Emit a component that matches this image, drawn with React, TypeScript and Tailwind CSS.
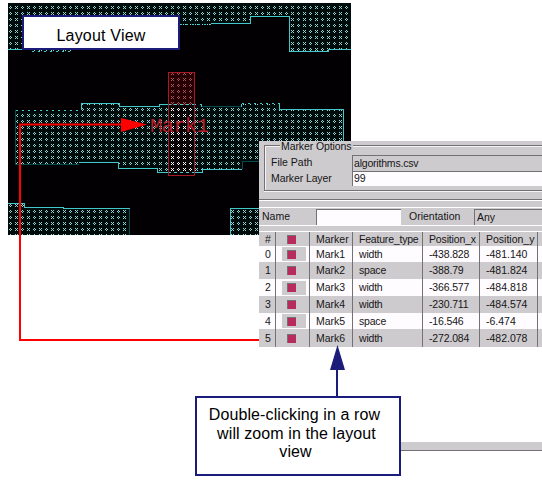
import React from "react";

const rows = [
  ["0", "Mark1", "width", "-438.828", "-481.140"],
  ["1", "Mark2", "space", "-388.79", "-481.824"],
  ["2", "Mark3", "width", "-366.577", "-484.818"],
  ["3", "Mark4", "width", "-230.711", "-484.574"],
  ["4", "Mark5", "space", "-16.546", "-6.474"],
  ["5", "Mark6", "width", "-272.084", "-482.078"],
];

const rowHeights = ["h-[16px]", "h-[17px]", "h-[17px]", "h-[17px]", "h-[16px]", "h-[18px]"];

function LayoutCanvas() {
  return (
    <svg className="absolute left-[8px] top-[3px]" width="343" height="232" viewBox="8 3 343 232" shapeRendering="crispEdges">
      <defs>
        {/* alternating columns of crosses and rings */}
        <pattern id="mesh" x="8" y="5" width="12" height="6" patternUnits="userSpaceOnUse">
          <rect width="12" height="6" fill="#000c0c" />
          <path d="M2 1h1v1h-1zM1 2h1v1h-1zM3 2h1v1h-1zM2 3h1v1h-1zM7 1h1v1h-1zM9 1h1v1h-1zM8 2h1v1h-1zM7 3h1v1h-1zM9 3h1v1h-1z" fill="#8fd8d8" />
        </pattern>
        <pattern id="redMesh" x="8" y="5" width="12" height="6" patternUnits="userSpaceOnUse">
          <rect width="12" height="6" fill="#260003" />
          <path d="M2 1h1v1h-1zM1 2h1v1h-1zM3 2h1v1h-1zM2 3h1v1h-1zM7 1h1v1h-1zM9 1h1v1h-1zM8 2h1v1h-1zM7 3h1v1h-1zM9 3h1v1h-1z" fill="#a85560" />
        </pattern>
        <pattern id="whiteMesh" x="8" y="5" width="12" height="6" patternUnits="userSpaceOnUse">
          <rect width="12" height="6" fill="#0a0506" />
          <path d="M2 1h1v1h-1zM1 2h1v1h-1zM3 2h1v1h-1zM2 3h1v1h-1zM7 1h1v1h-1zM9 1h1v1h-1zM8 2h1v1h-1zM7 3h1v1h-1zM9 3h1v1h-1z" fill="#ffffff" />
        </pattern>
      </defs>
      <rect x="8" y="3" width="343" height="232" fill="#020003" />
      <path d="M8 3H351V49.5H328.5V51.5H289.5V16.5H250.5V23.5H211V24.5H71.5V51.5H32V49.5H8z" fill="url(#mesh)" />
      <path d="M15.5 110.5H81.5V103.5H119.5V106.5H159.5V104.5H201.5V106.5H241.5V103.5H279.5V109.5H343.5V161.5H242.5V169.5H202.5V172.5H157.5V168.5H118.5V162.5H79V164.5H15.5z" fill="url(#mesh)" />
      <path d="M8 203.5H24.5V207.5H63.5V208.5H129.5V235H8zM230.5 208.5H351V235H230.5z" fill="url(#mesh)" />
      <g fill="none" stroke="#42c8ca">
        <path d="M8 49.5H32M211 23.5H250.5V16.5H289.5V51.5H328.5V49.5H351" />
        <path d="M81.5 110V103.5H119.5V106.5H159.5V104.5H168M201.5 104V107M241.5 107V103.5M279.5 103V109.5H343.5V161" />
        <path d="M79 162.5H118.5V168.5H157.5V172.5H202.5V169.5H242" />
        <path d="M8 203.5H24.5V207.5H63.5V208.5H129.5M230.5 235V208.5H260" />
        <path d="M32 51.5H71M180 24.5H211M16 110.5H81M194 104.5H201M242 103.5H279" strokeDasharray="2 4" />
      </g>
      <path d="M15.5 110V164.5H79M202 106.5H241M242.5 169V161.5H343M129.5 209V235" fill="none" stroke="#064b4d" />
      <rect x="168.5" y="72.5" width="26" height="32" fill="url(#redMesh)" />
      <rect x="168.5" y="104.5" width="26" height="68" fill="url(#whiteMesh)" />
      <path d="M168 104.5H195M168 172.5H195" stroke="#48cfce" strokeDasharray="3 3" />
      <rect x="168.5" y="72.5" width="26" height="103" fill="none" stroke="#a51a25" />
      <text x="150" y="132" fill="#b51f2a" className="font-['Liberation_Mono']" fontSize="21" textLength="59" lengthAdjust="spacing">Mark1</text>
    </svg>
  );
}

function MarkerTable() {
  return (
    <div className="flex flex-col border-t border-white">
      <div className="flex h-[14px] items-center bg-[#cdcbcd]">
        <Cells values={["#", "Marker", "Feature_type", "Position_x", "Position_y"]} boxed={false} />
      </div>
      {rows.map((row, i) => (
        <div key={row[0]} className={`flex items-center ${rowHeights[i]} ${i % 2 ? "bg-[#cdcbcd]" : "bg-[#fefcfe]"}`}>
          <Cells values={row} boxed={i % 2 === 0} />
        </div>
      ))}
    </div>
  );
}

function Cells({ values, boxed }: { values: string[]; boxed: boolean }) {
  const cell = "flex h-full shrink-0 items-center border-r border-[#737173] whitespace-pre pl-[6px]";
  return (
    <>
      <div className={`${cell} w-[17px] pl-[5px]`}>{values[0]}</div>
      <div className={`${cell} w-[34px] pl-[5px]`}>
        <div className={`flex h-[14px] w-[24px] items-center pl-[5px] ${boxed ? "bg-[#cdcbcd]" : ""}`}>
          <div className="h-[9px] w-[9px] border-l border-t border-[#737173] bg-[#b72c5d]" />
        </div>
      </div>
      <div className={`${cell} w-[43px]`}>{values[1]}</div>
      <div className={`${cell} w-[70px] tracking-[-0.2px]`}>{values[2]}</div>
      <div className={`${cell} w-[57px] tracking-[-0.15px]`}>{values[3]}</div>
      <div className={`${cell} w-[58px]`}>{values[4]}</div>
    </>
  );
}

function MarkerPanel() {
  return (
    <section className="absolute left-[259px] top-[141px] flex h-[206px] w-[283px] flex-col overflow-hidden bg-[#cdcbcd] text-[10.5px] leading-none text-[#171517]">
      <div className="h-[58px] pl-[5px] pt-1">
        <div className="h-[46px] border-y border-l border-[#737173] shadow-[inset_1px_1px_0_#f5f3f5,0_1px_0_#f5f3f5]">
          <div className="-mt-[5px] ml-[15px] w-[73px] bg-[#cdcbcd] pl-px whitespace-nowrap tracking-[-0.1px]">Marker Options</div>
          <div className="mt-[3px] flex h-[16px] items-center">
            <span className="w-[87px] pl-[6px]">File Path</span>
            <div className="flex h-full flex-1 items-center border-l border-t border-[#737173] pl-px tracking-[-0.2px]">algorithms.csv</div>
          </div>
          <div className="flex h-[15px] items-center">
            <span className="w-[87px] pl-[6px] tracking-[-0.1px]">Marker Layer</span>
            <div className="flex h-full flex-1 items-center border-l border-t border-[#737173] bg-[#fefcfe] pl-px">99</div>
          </div>
        </div>
      </div>
      <div className="h-[8px] border-t border-[#737173] shadow-[inset_0_1px_0_white]" />
      <div className="flex h-[18px] items-center border-t border-white">
        <span className="w-[57px] pl-[3px]">Name</span>
        <div className="h-[16px] w-[85px] border-l border-t border-[#737173] bg-[#fefcfe]" />
        <span className="w-[73px] pl-[8px]">Orientation</span>
        <div className="flex h-[16px] flex-1 items-center border-l border-t border-[#737173] pl-[2px]">Any</div>
      </div>
      <div className="h-[6px] border-t border-white" />
      <MarkerTable />
    </section>
  );
}

export default function App() {
  return (
    <main className="relative h-[483px] w-[542px] overflow-hidden bg-white font-['Liberation_Sans',sans-serif]">
      <LayoutCanvas />
      <div className="absolute left-[22px] top-[15px] flex h-[35px] w-[158px] items-center justify-center border-2 border-[#1b1b79] bg-white pt-[6px] text-[16px] leading-none tracking-[0.2px] text-black">
        Layout View
      </div>
      <MarkerPanel />
      <div className="absolute left-[401px] top-[442px] h-[9px] w-[141px] border-b border-[#737173] bg-[#cdcbcd]" />
      <svg className="absolute left-0 top-0" width="542" height="483" viewBox="0 0 542 483">
        <path d="M259 340H20V124.5H123" fill="none" stroke="#ff0000" strokeWidth="2" />
        <path d="M121 118L147 124.5L121 132z" fill="#ff0000" />
        <path d="M337 397V368" stroke="#1b1b79" strokeWidth="2" />
        <path d="M337.5 345L345 370H330z" fill="#1b1b79" />
      </svg>
      <div className="absolute left-[195px] top-[396px] flex h-[80px] w-[206px] flex-col items-center border-2 border-[#1b1b79] bg-white pt-[8px] text-[16px] leading-[18.5px] tracking-[0.1px] whitespace-pre text-black">
        <span className="-ml-[7px]">Double-clicking in a row</span>
        <span className="-ml-[3px]">will zoom in the layout</span>
        <span className="-ml-[5px]">view</span>
      </div>
    </main>
  );
}
